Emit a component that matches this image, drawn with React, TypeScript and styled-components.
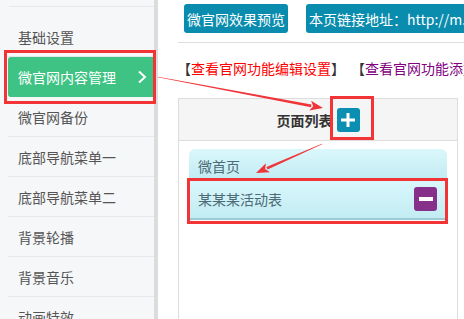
import React from "react";
import styled, { createGlobalStyle } from "styled-components";

const GlobalStyle = createGlobalStyle`
  html, body {
    margin: 0;
    padding: 0;
    background: #fff;
    font-family: "Noto Sans CJK SC", "Liberation Sans", sans-serif;
    overflow: hidden;
  }
`;

const menu = [
  "基础设置",
  "微官网内容管理",
  "微官网备份",
  "底部导航菜单一",
  "底部导航菜单二",
  "背景轮播",
  "背景音乐",
  "动画特效",
];

// tapered red annotation arrow
const arrowPoints = (x1: number, y1: number, x2: number, y2: number) => {
  const len = Math.hypot(x2 - x1, y2 - y1);
  const dx = (x2 - x1) / len;
  const dy = (y2 - y1) / len;
  const nx = -dy;
  const ny = dx;
  const bx = x2 - dx * 12;
  const by = y2 - dy * 12;
  const shaft = [
    [x1 + nx * 0.3, y1 + ny * 0.3],
    [bx + nx * 1.4, by + ny * 1.4],
    [bx - nx * 1.4, by - ny * 1.4],
    [x1 - nx * 0.3, y1 - ny * 0.3],
  ];
  const head = [
    [x2, y2],
    [bx + nx * 5 - dx * 1, by + ny * 5 - dy * 1],
    [bx + dx * 2, by + dy * 2],
    [bx - nx * 5 - dx * 1, by - ny * 5 - dy * 1],
  ];
  const s = (p: number[][]) => p.map((q) => q.join(",")).join(" ");
  return { shaft: s(shaft), head: s(head) };
};

const App: React.FC = () => {
  const a1 = arrowPoints(158, 77, 323, 108);
  const a2 = arrowPoints(322, 144, 256, 173);

  return (
    <Page>
      <GlobalStyle />
      <Sidebar>
        <SideTop />
        <Menu>
          {menu.map((m, i) => (
            <MenuItem key={m} $active={i === 1}>
              <span>{m}</span>
              {i === 1 && (
                <svg width="10" height="14" viewBox="0 0 10 14">
                  <polyline
                    points="2,1.5 8,7 2,12.5"
                    fill="none"
                    stroke="#fff"
                    strokeWidth="2"
                  />
                </svg>
              )}
            </MenuItem>
          ))}
        </Menu>
      </Sidebar>

      <Main>
        <ButtonRow>
          <TealButton>微官网效果预览</TealButton>
          <TealButton>本页链接地址：http://m.weiguanwang.com/</TealButton>
        </ButtonRow>
        <Rule />
        <LinkRow>
          <LinkItem $color="#ff0000">
            <Open>【</Open>
            <span>查看官网功能编辑设置</span>
            <Close>】</Close>
          </LinkItem>
          <LinkItem $color="#800080">
            <Open>【</Open>
            <span>查看官网功能添加设置</span>
            <Close>】</Close>
          </LinkItem>
        </LinkRow>

        <Table>
          <TableHead>
            <span>页面列表</span>
            <SquareButton $bg="#0a8fb2">
              <svg width="14" height="14" viewBox="0 0 14 14">
                <rect x="5.5" y="0" width="3" height="14" fill="#fff" />
                <rect x="0" y="5.5" width="14" height="3" fill="#fff" />
              </svg>
            </SquareButton>
          </TableHead>
          <TableBody>
            <PageItem $first>
              <span>微首页</span>
            </PageItem>
            <PageItem>
              <span>某某某活动表</span>
              <SquareButton $bg="#86308a">
                <svg width="14" height="4" viewBox="0 0 14 4">
                  <rect x="0" y="0" width="14" height="4" fill="#fff" />
                </svg>
              </SquareButton>
            </PageItem>
          </TableBody>
        </Table>
      </Main>

      <MarkBox style={{ left: 4, top: 50, width: 152, height: 54 }} />
      <MarkBox style={{ left: 330, top: 96, width: 44, height: 44 }} />
      <MarkBox style={{ left: 187, top: 178, width: 261, height: 46 }} />

      <Arrows width="464" height="319" viewBox="0 0 464 319">
        <polygon points={a1.shaft} fill="#f0353a" />
        <polygon points={a1.head} fill="#f0353a" />
        <polygon points={a2.shaft} fill="#f0353a" />
        <polygon points={a2.head} fill="#f0353a" />
      </Arrows>
    </Page>
  );
};

export default App;

const Page = styled.div`
  position: relative;
  width: 464px;
  height: 319px;
  display: flex;
  overflow: hidden;
`;

const Sidebar = styled.div`
  width: 154px;
  flex-shrink: 0;
  background: #f6f7f9;
  border-right: 4px solid #dcdcdc;
`;

const SideTop = styled.div`
  height: 6px;
  margin-left: 9px;
  border-bottom: 1px solid #e6e8eb;
`;

const Menu = styled.div`
  margin-top: 10px;
`;

const MenuItem = styled.div<{ $active?: boolean }>`
  height: 40px;
  box-sizing: border-box;
  margin-left: 8px;
  padding: 0 7px 0 10px;
  display: flex;
  align-items: center;
  justify-content: space-between;
  font-size: 14px;
  line-height: 20px;
  color: ${(p) => (p.$active ? "#fff" : "#555")};
  background: ${(p) => (p.$active ? "#3ec384" : "transparent")};
  border-radius: ${(p) => (p.$active ? "3px 0 0 3px" : "0")};
  border-bottom: 1px solid ${(p) => (p.$active ? "#3ec384" : "#e6e8eb")};
`;

const Main = styled.div`
  flex: 1;
  min-width: 0;
  padding: 4px 0 0 20px;
  display: flex;
  flex-direction: column;
`;

const ButtonRow = styled.div`
  display: flex;
  gap: 18px;
  margin-left: 6px;
`;

const TealButton = styled.div`
  height: 29px;
  padding: 0 3px;
  display: flex;
  align-items: center;
  background: #0a8cae;
  color: #fff;
  font-size: 14px;
  border-radius: 3px;
  white-space: nowrap;
  flex-shrink: 0;
`;

const Rule = styled.div`
  margin-top: 9px;
  border-top: 1px solid #dddddd;
  width: 300px;
`;

const LinkRow = styled.div`
  display: flex;
  gap: 21px;
  margin: 15px 0 0 7px;
  font-size: 14px;
  line-height: 20px;
  white-space: nowrap;
`;

const LinkItem = styled.div<{ $color: string }>`
  flex-shrink: 0;
  color: ${(p) => p.$color};
`;

const Open = styled.span`
  color: #333;
  margin-left: -8px;
`;

const Close = styled.span`
  color: #333;
  margin-right: -7px;
`;

const Table = styled.div`
  margin-top: 20px;
  width: 280px;
  flex: 1;
  box-sizing: border-box;
  border: 1px solid #dddddd;
  border-bottom: none;
`;

const TableHead = styled.div`
  height: 41px;
  background: #f5f5f5;
  border-bottom: 1px solid #dddddd;
  display: flex;
  align-items: center;
  justify-content: center;
  gap: 4px;
  font-size: 14px;
  font-weight: bold;
  color: #333;
`;

const SquareButton = styled.div<{ $bg: string }>`
  width: 23px;
  height: 24px;
  border-radius: 3px;
  background: ${(p) => p.$bg};
  display: flex;
  align-items: center;
  justify-content: center;
`;

const TableBody = styled.div`
  padding: 8px 10px 0 10px;
`;

const PageItem = styled.div<{ $first?: boolean }>`
  box-sizing: border-box;
  height: ${(p) => (p.$first ? "29px" : "42px")};
  padding: ${(p) => (p.$first ? "7px 9px 0" : "0 10px 0 9px")};
  display: flex;
  align-items: ${(p) => (p.$first ? "flex-start" : "center")};
  justify-content: space-between;
  font-size: 14px;
  line-height: 20px;
  color: #4d6b76;
  background: linear-gradient(#dbf8fc, #c2ecf3);
  border-radius: ${(p) => (p.$first ? "6px 6px 0 0" : "0")};
  border-top: ${(p) => (p.$first ? "none" : "1px solid #a9d3da")};
  border-bottom: ${(p) => (p.$first ? "none" : "2px solid #9ccbd3")};
`;

const MarkBox = styled.div`
  position: absolute;
  box-sizing: border-box;
  border: 3px solid #f23437;
  pointer-events: none;
`;

const Arrows = styled.svg`
  position: absolute;
  left: 0;
  top: 0;
  pointer-events: none;
`;
